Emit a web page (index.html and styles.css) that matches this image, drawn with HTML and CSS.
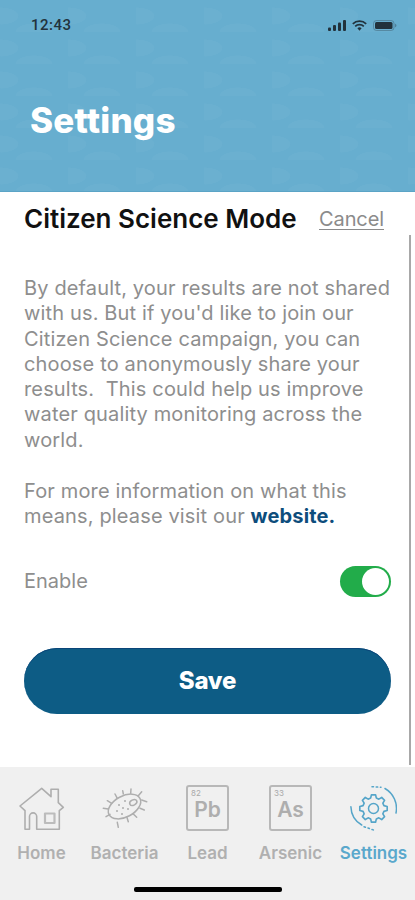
FILE: index.html
```html
<!DOCTYPE html>
<html lang="en">
<head>
<meta charset="utf-8">
<title>Settings</title>
<link rel="stylesheet" href="styles.css">
</head>
<body>
<div class="screen">
  <header class="header">
    <div class="status">
      <span class="time">12:43</span>
      <span class="status-icons">
        <svg width="18" height="11" viewBox="0 0 18 11"><g fill="#22323c"><rect x="0" y="7.500" width="3" height="3.500" rx="1"/><rect x="5" y="5" width="3" height="6" rx="1"/><rect x="10" y="2.500" width="3" height="8.500" rx="1"/><rect x="15" y="0" width="3" height="11" rx="1"/></g></svg>
        <svg width="15" height="11" viewBox="0 0 15 11"><g fill="none" stroke="#22323c" stroke-width="1.700"><path d="M.8 3.800a9.600 9.600 0 0 1 13.400 0"/><path d="M3.200 6.300a6.200 6.200 0 0 1 8.600 0"/></g><path d="M5.400 8.300a3 3 0 0 1 4.200 0L7.500 10.700z" fill="#22323c"/></svg>
        <svg width="24" height="11" viewBox="0 0 24 11"><rect x=".5" y=".5" width="20.500" height="10" rx="3" fill="none" stroke="#3f6274" opacity=".5"/><rect x="2" y="2" width="17.500" height="7" rx="1.500" fill="#22323c"/><path d="M22 3.800v3.400c.9-.3 1.500-1 1.500-1.700S22.900 4.100 22 3.800z" fill="#3f6274" opacity=".6"/></svg>
      </span>
    </div>
    <h1 class="title">Settings</h1>
  </header>

  <main class="content">
    <div class="heading-row">
      <h2 class="heading">Citizen Science Mode</h2>
      <a class="cancel" href="#">Cancel</a>
    </div>
    <p class="para">By default, your results are not shared with us. But if you'd like to join our Citizen Science campaign, you can choose to anonymously share your results.&nbsp; This could help us improve water quality monitoring across the world.</p>
    <p class="para para-second">For more information on what this means, please visit our <a class="link" href="#">website.</a></p>
    <div class="enable-row">
      <span class="enable">Enable</span>
      <span class="toggle"><span class="knob"></span></span>
    </div>
    <button class="save" type="button">Save</button>
    <span class="scrollbar"></span>
  </main>

  <nav class="tabs">
    <div class="tab-row">
      <a class="tab" href="#">
        <svg class="icon" width="46" height="46" viewBox="0 0 46 46" fill="none" stroke="#aeaeae" stroke-width="1.600" stroke-linejoin="round"><path d="M6 44.300V25.700L1 21 22.700 3.300 32 11.700V4.300h7.300v13.400l5 4.600-4 3.400v18.600H17.700V31.500a3.600 3.600 0 0 0-7.200 0v12.800z"/><rect x="26" y="28.500" width="9.500" height="9.500" stroke-width="2.200" stroke="#bcbcbc"/></svg>
        <span class="label">Home</span>
      </a>
      <a class="tab" href="#">
        <svg class="icon" width="46" height="46" viewBox="0 0 46 46" fill="none" stroke="#aeaeae" stroke-width="1.500" stroke-linecap="round"><ellipse cx="22.500" cy="21.500" rx="17.500" ry="10.500" transform="rotate(-28 22.500 21.500)"/><ellipse cx="31.300" cy="17.500" rx="3.800" ry="2.600" transform="rotate(-28 31.300 17.500)"/><path d="M20.700 5.700l.6 3.300M29 4l-.3 4.300M13 9l2.300 4.300M5.300 15.700l4.400 2.600M1.300 23.300l5 .7M4 31.700l4-2.400M16.300 42.300l-1-5M26.300 36.700L25 32.500M34.700 32.300L31.300 29M42.300 25L38 23.300M44.700 16.700l-5-1.700M39.700 6.700l-3.400 4"/><g fill="#aeaeae" stroke="none"><circle cx="15" cy="26" r="1"/><circle cx="20" cy="29" r="1"/><circle cx="21" cy="23" r="1"/><circle cx="26" cy="24" r="1"/><circle cx="23" cy="16" r="1"/><circle cx="17" cy="20" r="1"/></g></svg>
        <span class="label">Bacteria</span>
      </a>
      <a class="tab" href="#">
        <span class="element"><span class="num">82</span><span class="sym">Pb</span></span>
        <span class="label">Lead</span>
      </a>
      <a class="tab" href="#">
        <span class="element"><span class="num">33</span><span class="sym">As</span></span>
        <span class="label">Arsenic</span>
      </a>
      <a class="tab tab-active" href="#">
        <svg class="icon" width="47" height="47" viewBox="0 0 47 47" fill="none" stroke="#55a5c9" stroke-width="1.500" stroke-linecap="round"><circle cx="23.500" cy="23.500" r="5"/><g transform="translate(23.500 23.500) scale(.82)"><path d="M-2.500-16.700h5l1 4 3 1.300 3.500-2.100 3.500 3.500-2.100 3.500 1.300 3 4 1v5l-4 1-1.300 3 2.100 3.500-3.500 3.500-3.500-2.100-3 1.300-1 4h-5l-1-4-3-1.300-3.500 2.100-3.500-3.500 2.100-3.500-1.300-3-4-1v-5l4-1 1.300-3-2.100-3.500 3.500-3.500 3.500 2.100 3-1.300z" stroke-width="2" stroke-linejoin="round"/></g><path d="M35 3.500A23 23 0 0 1 46 28"/><path d="M11.700 40A22 22 0 0 1 .9 21.700"/><path d="M22 1.700 31 2.300" stroke-dasharray="1.500 2.700"/><path d="M14 41.700 25.700 45.700" stroke-dasharray="1.500 2.700"/></svg>
        <span class="label">Settings</span>
      </a>
    </div>
    <div class="home-bar"></div>
  </nav>
</div>
</body>
</html>
```
FILE: styles.css
```css
* { box-sizing: border-box; }
html, body { margin: 0; padding: 0; }
body { width: 415px; height: 900px; overflow: hidden; background: #fff; font-family: "Inter", "Liberation Sans", sans-serif; }
a { text-decoration: none; color: inherit; }

.screen { display: flex; flex-direction: column; height: 900px; }

.header {
  height: 192px;
  flex: none;
  background-color: #67aecf;
  background-image:
    radial-gradient(ellipse 30px 14px at 50% 100%, rgba(255,255,255,.025) 60%, transparent 62%),
    radial-gradient(ellipse 30px 14px at 0 50%, rgba(255,255,255,.025) 60%, transparent 62%);
  background-size: 68px 32px;
  border-bottom: 1px solid #5ba4c6;
  padding: 17px 18px 0 30px;
}
.status { display: flex; justify-content: space-between; align-items: center; height: 17px; }
.time { font: 500 15px/17px "Roboto", sans-serif; color: #22323c; letter-spacing: .5px; padding-left: 1px; }
.status-icons { display: flex; align-items: center; gap: 6px; }
.title { margin: 64px 0 0; font: 800 35px/44px "Inter", sans-serif; color: #fff; letter-spacing: .2px; }

.content { position: relative; flex: 1; padding: 0 24px; }
.heading-row { display: flex; justify-content: space-between; align-items: center; padding-top: 10px; padding-right: 7px; }
.heading { margin: 0; font: 600 26px/34px "Inter", sans-serif; color: #111; }
.cancel { font: 400 20px/28px "Inter", sans-serif; color: #8b8b8b; text-decoration: underline; text-underline-offset: 3px; text-decoration-thickness: 1px; letter-spacing: -.1px; }
.para { margin: 0; font: 400 20px/25.3px "Inter", sans-serif; color: #8e8e8e; letter-spacing: .15px; }
.content .para { margin-top: 40px; }
.content .para-second { margin-top: 25.500px; }
.link { font-weight: 700; color: #0d4d7c; }
.enable-row { display: flex; justify-content: space-between; align-items: center; margin-top: 37px; }
.enable { font: 400 20px/31px "Inter", sans-serif; color: #8e8e8e; }
.toggle { width: 51px; height: 31px; border-radius: 16px; background: #22ac4a; display: block; padding: 2px; }
.knob { display: block; width: 27px; height: 27px; margin-left: 20px; border-radius: 50%; background: #fff; }
.save { display: block; width: 100%; height: 66px; margin-top: 51px; border: 0; border-radius: 33px; background: #0d5c85; box-shadow: inset 0 1px #0a4578; color: #fff; font: 800 24px/1 "Inter", sans-serif; letter-spacing: -.2px; }
.scrollbar { position: absolute; right: 4px; top: 43px; bottom: 2px; width: 2px; background: #a8a8a8; }

.tabs { height: 133px; flex: none; background: #f0f0f0; display: flex; flex-direction: column; }
.tab-row { display: grid; grid-template-columns: repeat(5, 83px); padding-top: 18px; }
.tab { display: flex; flex-direction: column; align-items: center; height: 78px; }
.icon { display: block; flex: none; }
.label { margin-top: auto; font: 600 17px/20px "Inter", sans-serif; color: #b0b0b0; white-space: nowrap; }
.element { position: relative; flex: none; display: flex; align-items: center; justify-content: center; width: 43px; height: 46px; border: 2px solid #b8b8b8; border-radius: 3px; }
.num { position: absolute; left: 3px; top: 1px; font: 400 8px/10px "Inter", sans-serif; color: #a9a9a9; }
.sym { font: 600 21px/1 "Inter", sans-serif; color: #aeaeae; margin-top: 2px; }
.tab-active .label { color: #5aa8cc; }
.home-bar { width: 148px; height: 4.500px; border-radius: 2px; background: #000; margin: 24px auto 0; flex: none; }
```
